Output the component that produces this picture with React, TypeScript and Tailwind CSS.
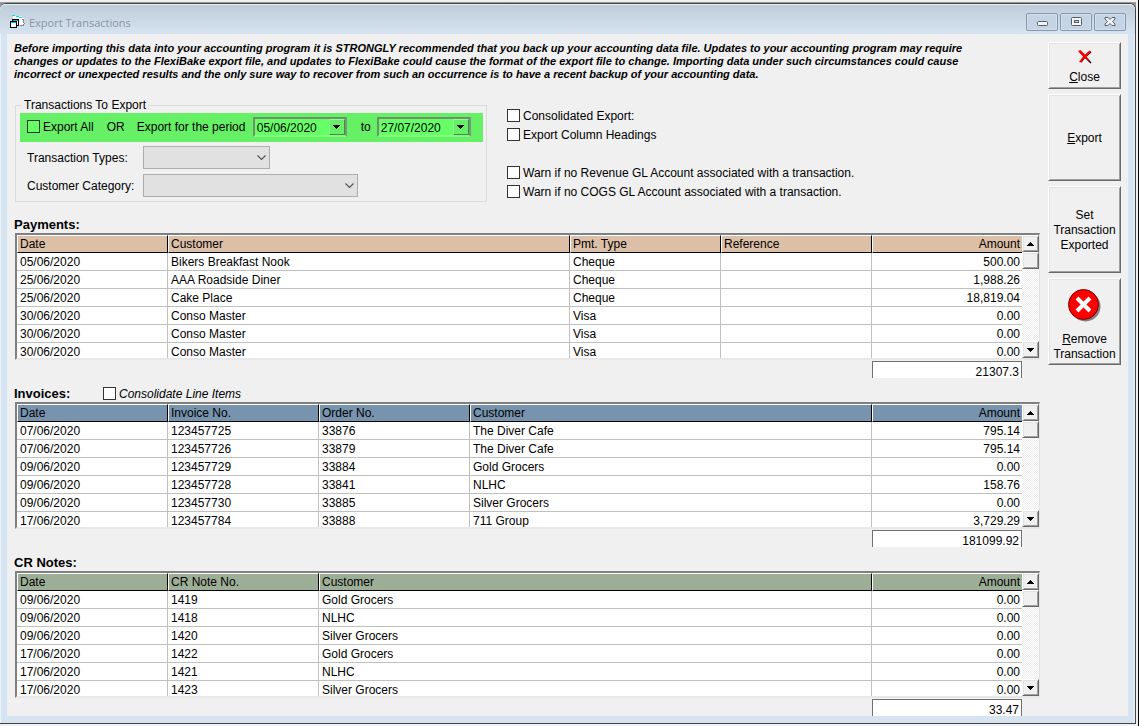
import { useId, type ReactNode } from "react";

type Column = { label: string; fluid?: boolean; right?: boolean };

const paymentColumns: Column[] = [
  { label: "Date" },
  { label: "Customer", fluid: true },
  { label: "Pmt. Type" },
  { label: "Reference" },
  { label: "Amount", right: true },
];
const paymentRows = [
  ["05/06/2020", "Bikers Breakfast Nook", "Cheque", "", "500.00"],
  ["25/06/2020", "AAA Roadside Diner", "Cheque", "", "1,988.26"],
  ["25/06/2020", "Cake Place", "Cheque", "", "18,819.04"],
  ["30/06/2020", "Conso Master", "Visa", "", "0.00"],
  ["30/06/2020", "Conso Master", "Visa", "", "0.00"],
  ["30/06/2020", "Conso Master", "Visa", "", "0.00"],
];

const invoiceColumns: Column[] = [
  { label: "Date" },
  { label: "Invoice No." },
  { label: "Order No." },
  { label: "Customer", fluid: true },
  { label: "Amount", right: true },
];
const invoiceRows = [
  ["07/06/2020", "123457725", "33876", "The Diver Cafe", "795.14"],
  ["07/06/2020", "123457726", "33879", "The Diver Cafe", "795.14"],
  ["09/06/2020", "123457729", "33884", "Gold Grocers", "0.00"],
  ["09/06/2020", "123457728", "33841", "NLHC", "158.76"],
  ["09/06/2020", "123457730", "33885", "Silver Grocers", "0.00"],
  ["17/06/2020", "123457784", "33888", "711 Group", "3,729.29"],
];

const noteColumns: Column[] = [
  { label: "Date" },
  { label: "CR Note No." },
  { label: "Customer", fluid: true },
  { label: "Amount", right: true },
];
const noteRows = [
  ["09/06/2020", "1419", "Gold Grocers", "0.00"],
  ["09/06/2020", "1418", "NLHC", "0.00"],
  ["09/06/2020", "1420", "Silver Grocers", "0.00"],
  ["17/06/2020", "1422", "Gold Grocers", "0.00"],
  ["17/06/2020", "1421", "NLHC", "0.00"],
  ["17/06/2020", "1423", "Silver Grocers", "0.00"],
];

const raised =
  "border border-t-white border-l-white border-r-[#696969] border-b-[#696969] bg-[#f0f0f0] shadow-[inset_1px_1px_0_#e3e3e3,inset_-1px_-1px_0_#a0a0a0]";

function Check({ children, green, italic }: { children: ReactNode; green?: boolean; italic?: boolean }) {
  return (
    <label className={`flex h-[19px] items-center gap-[3px] whitespace-nowrap ${italic ? "italic" : ""}`}>
      <input
        type="checkbox"
        className={`size-[13px] shrink-0 appearance-none border border-[#333] checked:bg-[#333] ${green ? "bg-[#66ff66]" : "bg-white"}`}
      />
      {children}
    </label>
  );
}

function Triangle({ up }: { up?: boolean }) {
  return (
    <svg width="7" height="4" viewBox="0 0 7 4" shapeRendering="crispEdges" aria-hidden="true">
      <path d={up ? "M3 0h1v1h1v1h1v1h1v1H0V3h1V2h1V1h1z" : "M0 0h7v1H6v1H5v1H4v1H3V3H2V2H1V1H0z"} fill="#000" />
    </svg>
  );
}

function DateField({ label, value }: { label: string; value: string }) {
  return (
    <div className="flex h-5 w-[94px] border-2 border-t-[#6f8f6f] border-r-[#6f9f6f] border-b-[#7dff7d] border-l-[#6f8f6f] bg-[#66ff66]">
      <input aria-label={label} defaultValue={value} className="w-0 min-w-0 flex-1 bg-transparent pt-0.5 pl-0.5 text-[12px] outline-none" />
      <button
        aria-label={`${label} calendar`}
        className="flex w-4 items-center justify-center border border-t-[#8fff8f] border-r-[#5a7a5a] border-b-[#5a7a5a] border-l-[#8fff8f] bg-[#66f066]"
      >
        <Triangle />
      </button>
    </div>
  );
}

function Combo({ label, wide }: { label: string; wide?: boolean }) {
  const id = useId();
  return (
    <div className="flex h-[23px] items-center pl-[7px]">
      <label htmlFor={id} className="w-[116px] whitespace-nowrap">
        {label}
      </label>
      <div className={`relative h-full ${wide ? "w-[215px]" : "w-[127px]"}`}>
        <select id={id} className="size-full appearance-none border border-[#adadad] bg-[#e1e1e1]" />
        <svg className="pointer-events-none absolute top-2 right-1" width="9" height="7" viewBox="0 0 9 7" aria-hidden="true">
          <path d="M.5 1.5l4 4 4-4" fill="none" stroke="#555" strokeWidth="1.2" />
        </svg>
      </div>
    </div>
  );
}

function ScrollBar() {
  return (
    <div className="flex w-[17px] shrink-0 flex-col bg-[repeating-conic-gradient(#ffffff_0_25%,#ededed_0_50%)] bg-[length:2px_2px]">
      <button aria-label="Scroll up" className={`flex h-[17px] items-center justify-center ${raised}`}>
        <Triangle up />
      </button>
      <div className={`h-[17px] ${raised}`} />
      <button aria-label="Scroll down" className={`mt-auto flex h-[17px] items-center justify-center ${raised}`}>
        <Triangle />
      </button>
    </div>
  );
}

type GridProps = {
  title: string;
  extra?: ReactNode;
  columns: Column[];
  rows: string[][];
  headClass: string;
  total: string;
};

function Grid({ title, extra, columns, rows, headClass, total }: GridProps) {
  return (
    <section>
      <div className="flex h-[17px] items-center">
        <h2 className="w-[89px] text-[13px] leading-[17px] font-bold">{title}</h2>
        {extra}
      </div>
      <div className="ml-px flex h-[127px] border-t-2 border-r border-b-2 border-l-2 border-t-[#808080] border-r-[#e3e3e3] border-b-[#e8e8e8] border-l-[#808080] bg-white">
        <div className="min-w-0 flex-1 overflow-hidden">
          <table aria-label={title} className="w-full table-fixed border-separate border-spacing-0">
            <thead>
              <tr>
                {columns.map((c) => (
                  <th
                    key={c.label}
                    scope="col"
                    className={`h-[18px] border-t border-b border-l border-t-white border-b-black border-l-white p-0 pl-0.5 leading-4 font-normal ${headClass} ${
                      c.right ? "w-[150px] pr-0.5 text-right" : "border-r border-r-black text-left"
                    } ${c.fluid || c.right ? "" : "w-[151px]"}`}
                  >
                    {c.label}
                  </th>
                ))}
              </tr>
            </thead>
            <tbody>
              {rows.map((row, r) => (
                <tr key={r}>
                  {row.map((cell, i) => (
                    <td
                      key={i}
                      className={`h-[18px] truncate border-b border-[#c0c0c0] p-0 pt-0.5 leading-[15px] ${
                        columns[i].right ? "pr-0.5 text-right" : "border-r pl-[3px]"
                      }`}
                    >
                      {cell}
                    </td>
                  ))}
                </tr>
              ))}
            </tbody>
          </table>
        </div>
        <ScrollBar />
      </div>
      <output
        aria-label={`${title} total`}
        className="mt-px mr-[18px] ml-auto block h-[17px] w-[150px] border-t border-r border-l border-[#707070] bg-white pt-0.5 pr-0.5 text-right leading-[17px]"
      >
        {total}
      </output>
    </section>
  );
}

function SideButton({ children, className }: { children: ReactNode; className: string }) {
  return <button className={`flex w-[73px] flex-col items-center justify-center leading-[15px] ${className} ${raised}`}>{children}</button>;
}

function CaptionButton({ label, children }: { label: string; children: ReactNode }) {
  return (
    <button
      aria-label={label}
      className="flex h-[18px] w-8 items-center justify-center rounded-[2px] border border-[#8795ad] bg-[#c5d4e4] shadow-[inset_0_0_0_1px_#d3e0ec]"
    >
      <svg width="12" height="10" viewBox="0 0 12 10" aria-hidden="true">
        {children}
      </svg>
    </button>
  );
}

export default function App() {
  return (
    <div className="flex min-h-screen flex-col border-r border-black bg-[#f0f0f0] pt-[2px] pr-[2px] pb-[2px] font-['Liberation_Sans',Arial,sans-serif] text-[12px] text-black">
      <div className="flex flex-1 flex-col border-t border-[#999] bg-[#999]">
        <div className="flex flex-1 flex-col rounded-t-[6px] border-t border-r border-b border-[#444] bg-[#d6e4f2] shadow-[inset_1px_1px_0_#eef3f8,inset_-1px_0_0_#eef3f8]">
          <header className="flex h-[30px] items-center rounded-t-[6px] border-t border-[#e8eef4] bg-linear-to-b from-[#bfcddb] to-[#d6e4f2] pr-[9px] pl-[10px]">
            <svg width="16" height="14" viewBox="0 0 16 14" shapeRendering="crispEdges" className="mt-1" aria-hidden="true">
              <path d="M3 1h9v2h2v7h-5V5H3z" fill="#fff" />
              <path d="M2 0h3v1H2zM6 1h3v1H6zM9 2h3v1H9z" fill="#00e5f0" />
              <path d="M12 5h1v5h-3v1h4V4h-2zM13 8h2v1h-2z" fill="#888" />
              <path d="M2 4h7v7H7v2H0V6h2z" fill="#000" />
              <path d="M3 6h5v4H7V6zM1 8h5v4H1z" fill="#fff" />
              <path d="M3 5h5v1H3zM1 7h5v1H1z" fill="#00b8c8" />
            </svg>
            <h1 className="mt-1.5 ml-[3px] font-['Open_Sans','Noto_Sans',sans-serif] text-[11px] leading-4 text-[#8d939b]">Export Transactions</h1>
            <div className="mt-1 ml-auto flex gap-0.5">
              <CaptionButton label="Minimize">
                <rect x="1.5" y="4.5" width="10" height="4" rx="1" fill="#f4f4f4" stroke="#555c68" />
              </CaptionButton>
              <CaptionButton label="Maximize">
                <rect x="1.5" y=".5" width="10" height="8" rx="1" fill="#f4f4f4" stroke="#555c68" />
                <rect x="4.5" y="3.5" width="4" height="2" fill="#c5d4e4" stroke="#555c68" />
              </CaptionButton>
              <CaptionButton label="Close window">
                <path
                  d="M1 .5h3l2 2 2-2h3v1.5L8.500 4.500 11 7v1.500H8l-2-2-2 2H1V7l2.500-2.500L1 2z"
                  fill="#f4f4f4"
                  stroke="#555c68"
                />
              </CaptionButton>
            </div>
          </header>

          <div className="mr-[7px] mb-[7px] ml-[7px] flex flex-1 items-start gap-2 bg-[#f0f0f0] pt-2 pr-[7px] pl-[7px]">
            <main className="min-w-0 flex-1">
              <p className="text-[11px] leading-[13px] font-bold italic">
                Before importing this data into your accounting program it is STRONGLY recommended that you back up your accounting data file. Updates to your accounting program may require
                <br />
                changes or updates to the FlexiBake export file, and updates to FlexiBake could cause the format of the export file to change. Importing data under such circumstances could cause
                <br />
                incorrect or unexpected results and the only sure way to recover from such an occurrence is to have a recent backup of your accounting data.
              </p>

              <div className="mt-[17px] flex items-start gap-5">
                <fieldset className="ml-px w-[472px] border border-[#dcdcdc] pr-[3px] pb-1 pl-1">
                  <legend className="ml-0.5 px-0.5 leading-[15px]">Transactions To Export</legend>
                  <div className="flex h-[29px] items-center bg-[#66f066] pb-0.5 pl-[7px]">
                    <Check green>Export All</Check>
                    <span className="ml-[13px]">OR</span>
                    <span className="ml-3 w-[116px] whitespace-nowrap">Export for the period</span>
                    <DateField label="From date" value="05/06/2020" />
                    <span className="w-[30px] pl-[14px]">to</span>
                    <DateField label="To date" value="27/07/2020" />
                  </div>
                  <div className="mt-1 flex flex-col gap-[5px]">
                    <Combo label="Transaction Types:" />
                    <Combo label="Customer Category:" wide />
                  </div>
                </fieldset>
                <div className="mt-2">
                  <Check>Consolidated Export:</Check>
                  <Check>Export Column Headings</Check>
                  <div className="mt-[19px]">
                    <Check>Warn if no Revenue GL Account associated with a transaction.</Check>
                    <Check>Warn if no COGS GL Account associated with a transaction.</Check>
                  </div>
                </div>
              </div>

              <div className="mt-[14px] flex flex-col gap-[7px]">
                <Grid title="Payments:" columns={paymentColumns} rows={paymentRows} headClass="bg-[#dbbfa7]" total="21307.3" />
                <Grid
                  title="Invoices:"
                  extra={<Check italic>Consolidate Line Items</Check>}
                  columns={invoiceColumns}
                  rows={invoiceRows}
                  headClass="bg-[#7893ad]"
                  total="181099.92"
                />
                <Grid title="CR Notes:" columns={noteColumns} rows={noteRows} headClass="bg-[#9dae96]" total="33.47" />
              </div>
            </main>

            <aside className="flex flex-col gap-[5px]">
              <SideButton className="h-[47px] pt-1">
                <svg width="14" height="14" viewBox="0 0 14 14" className="mb-1.5" aria-hidden="true">
                  <path d="M2 2l11 11M13 2L7 7l-4 5" fill="none" stroke="#111" strokeWidth="1.5" />
                  <path d="M0 1l2.500-1L7 4.500 11.500.5 13 1.500 8.500 6.500 13 12 6.500 8 3.500 12.500 1 12 5 6.500z" fill="#f00" />
                </svg>
                <span>
                  <u>C</u>lose
                </span>
              </SideButton>
              <SideButton className="h-[87px] pt-0.5">
                <span>
                  <u>E</u>xport
                </span>
              </SideButton>
              <SideButton className="h-[87px] pt-0.5">
                Set
                <br />
                Transaction
                <br />
                Exported
              </SideButton>
              <SideButton className="h-[87px] pt-2">
                <svg width="33" height="33" viewBox="0 0 33 33" className="mb-2.5" aria-hidden="true">
                  <circle cx="17.500" cy="17.500" r="15" fill="#808080" />
                  <circle cx="15.500" cy="15.500" r="15" fill="#f00" stroke="#700" />
                  <path d="M9 9l13 13M22 9L9 22" stroke="#fff" strokeWidth="4" />
                </svg>
                <span>
                  <u>R</u>emove
                </span>
                <span>Transaction</span>
              </SideButton>
            </aside>
          </div>
        </div>
      </div>
    </div>
  );
}
